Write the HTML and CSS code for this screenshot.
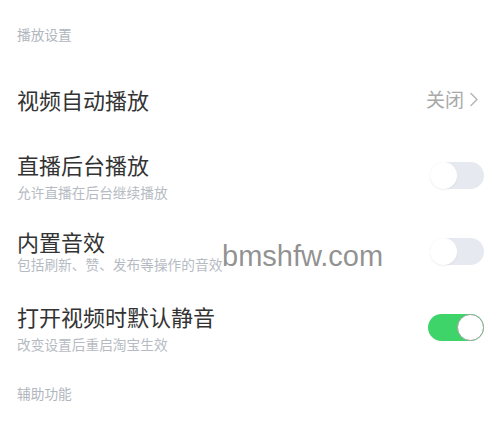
FILE: index.html
```html
<!DOCTYPE html>
<html lang="zh-CN">
<head>
<meta charset="utf-8">
<title>播放设置</title>
<link rel="stylesheet" href="styles.css">
</head>
<body>
<main class="settings">
  <h2 class="group-title">播放设置</h2>

  <div class="row">
    <div class="row-text">
      <div class="row-title">视频自动播放</div>
    </div>
    <div class="row-value">
      <span>关闭</span>
      <svg class="chevron" width="10" height="15" viewBox="0 0 10 15" aria-hidden="true">
        <polyline points="2,1.5 8,7.5 2,13.5" fill="none" stroke="#b3b3b3" stroke-width="1.4" stroke-linecap="round" stroke-linejoin="round"/>
      </svg>
    </div>
  </div>

  <div class="row">
    <div class="row-text">
      <div class="row-title">直播后台播放</div>
      <div class="row-desc">允许直播在后台继续播放</div>
    </div>
    <span class="switch"><span class="knob"></span></span>
  </div>

  <div class="row">
    <div class="row-text row-text-tight">
      <div class="row-title">内置音效</div>
      <div class="row-desc">包括刷新、赞、发布等操作的音效</div>
    </div>
    <span class="switch"><span class="knob"></span></span>
  </div>

  <div class="row">
    <div class="row-text">
      <div class="row-title">打开视频时默认静音</div>
      <div class="row-desc">改变设置后重启淘宝生效</div>
    </div>
    <span class="switch switch-on"><span class="knob"></span></span>
  </div>

  <h2 class="group-title group-title-next">辅助功能</h2>

  <div class="watermark">bmshfw.com</div>
</main>
</body>
</html>
```

FILE: styles.css
```css
html, body {
  margin: 0;
  padding: 0;
  background: #ffffff;
}

body {
  font-family: "Noto Sans CJK SC", "Noto Sans", sans-serif;
  color: #333333;
}

.settings {
  position: relative;
  padding: 0 16px 0 17px;
  height: 425px;
  box-sizing: border-box;
  overflow: hidden;
}

.group-title {
  margin: 0;
  padding: 24px 0 17px;
  font-size: 13.7px;
  line-height: 20px;
  font-weight: 400;
  color: #b1b6be;
}

.group-title-next {
  padding-top: 18px;
}

.row {
  height: 76px;
  display: flex;
  align-items: center;
  justify-content: space-between;
}

.row-text {
  display: flex;
  flex-direction: column;
  gap: 6px;
}

.row-text-tight {
  gap: 1px;
  padding-bottom: 3px;
}

.row-title {
  font-size: 22px;
  line-height: 28px;
  color: #333333;
}

.row-desc {
  font-size: 13.7px;
  line-height: 16px;
  color: #b6bbc3;
}

.row-value {
  display: flex;
  align-items: center;
  gap: 5px;
  margin-right: 5px;
  font-size: 19px;
  line-height: 26px;
  color: #a9a9a9;
}

.chevron {
  display: block;
}

.switch {
  position: relative;
  width: 54px;
  height: 27px;
  border-radius: 14px;
  background: #e6eaf0;
  flex: none;
}

.knob {
  position: absolute;
  left: 0;
  top: 0;
  width: 27px;
  height: 27px;
  border-radius: 50%;
  background: #ffffff;
  box-shadow: 0 1px 2px rgba(0, 0, 0, 0.06);
}

.switch-on {
  width: 56px;
  background: #3fd46a;
}

.switch-on .knob {
  left: auto;
  right: 0;
  box-sizing: border-box;
  border: 1.5px solid #9aa39c;
  box-shadow: none;
}

.watermark {
  position: absolute;
  left: 222px;
  top: 242px;
  font-family: "Liberation Sans", Arial, sans-serif;
  font-size: 29px;
  line-height: 29px;
  color: rgba(110, 110, 110, 0.75);
  pointer-events: none;
}
```
